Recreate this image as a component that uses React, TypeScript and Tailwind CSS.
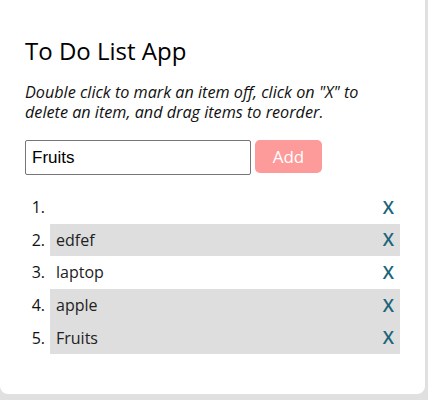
import { useState } from "react";

const items = ["", "edfef", "laptop", "apple", "Fruits"];
// rows marked off (grey background)
const done = [false, true, false, true, true];

export default function App() {
  const [text, setText] = useState("Fruits");

  return (
    <div className="min-h-[400px] w-[428px] bg-[#e0e0e0] font-['Open_Sans',sans-serif]">
      <div className="flex h-[394px] w-[425px] flex-col rounded-b-[8px] bg-white px-[25px] pt-[35px]">
        <h2 className="text-[24px] leading-[32px] text-black">To Do List App</h2>
        <p className="mt-[16px] text-[16.2px] italic leading-[19.5px] text-[#111]">
          Double click to mark an item off, click on "X" to delete an item, and drag items to reorder.
        </p>

        <div className="mt-[18px] flex items-start gap-[4px]">
          <input
            value={text}
            onChange={(e) => setText(e.target.value)}
            className="h-[35px] w-[226px] rounded-[2px] border border-[#767676] px-[6px] font-['Liberation_Sans',Arial,sans-serif] text-[17px] text-black outline-none"
          />
          <button className="h-[33px] w-[67px] rounded-[5px] bg-[#fd9a9a] text-[17px] text-white">
            Add
          </button>
        </div>

        <ol className="mt-[16px] flex flex-col">
          {items.map((item, i) => (
            <li key={i} className="flex h-[32.6px] items-center">
              <span className="w-[25px] pr-[5px] text-right text-[16px] text-[#111]">{i + 1}.</span>
              <div
                className={`flex h-full w-[350px] items-center justify-between pl-[6px] pr-[6px] text-[16px] text-[#222] ${
                  done[i] ? "bg-[#dedede]" : "bg-white"
                }`}
              >
                <span>{item}</span>
                <span className="text-[18px] font-semibold text-[#1b6478]">X</span>
              </div>
            </li>
          ))}
        </ol>
      </div>
    </div>
  );
}
